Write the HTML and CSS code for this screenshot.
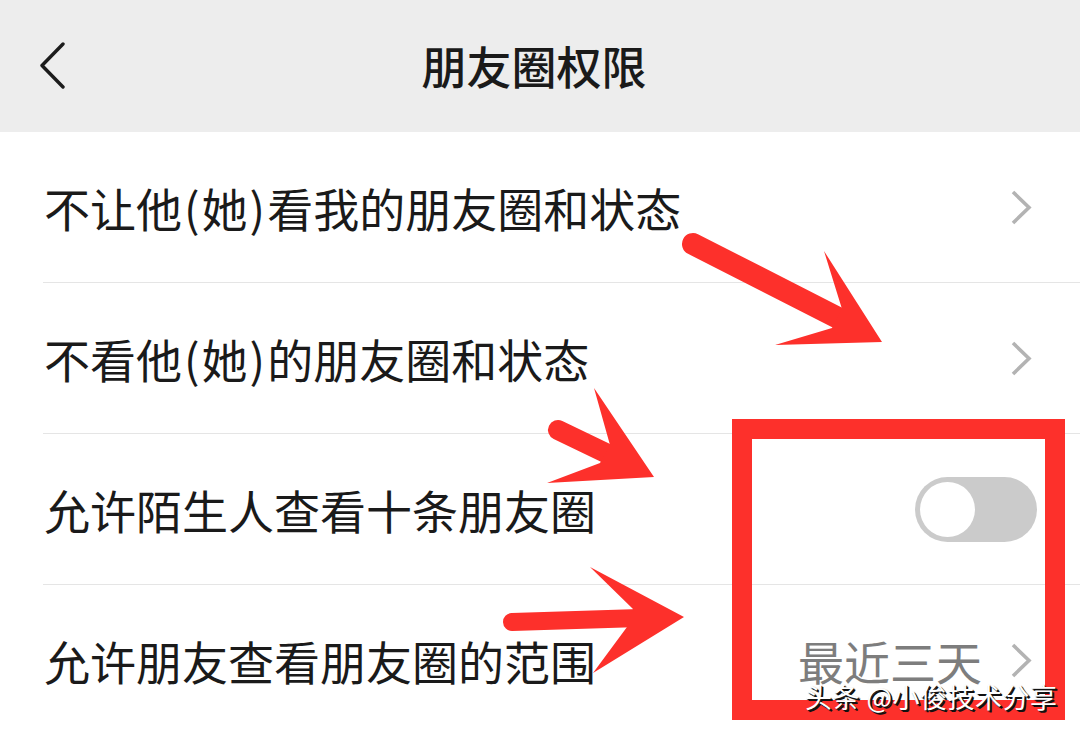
FILE: index.html
```html
<!DOCTYPE html>
<html lang="zh-CN">
<head>
<meta charset="utf-8">
<title>朋友圈权限</title>
<link rel="stylesheet" href="styles.css">
</head>
<body>
<div class="page">
  <header class="nav">
    <div class="nav-back">
      <svg width="30" height="50" viewBox="0 0 30 50"><path d="M23 2 L2 23.5 L23 45" fill="none" stroke="#1c1c1c" stroke-width="3.4" stroke-linecap="round" stroke-linejoin="round"/></svg>
    </div>
    <h1 class="nav-title">朋友圈权限</h1>
    <div class="nav-side"></div>
  </header>

  <ul class="list">
    <li class="row">
      <span class="label">不让他<span class="paren">(</span>她<span class="paren">)</span>看我的朋友圈和状态</span>
      <svg class="chev" width="26" height="36" viewBox="0 0 26 36"><path d="M2 2 L18 17.5 L2 33" fill="none" stroke="#b3b3b3" stroke-width="3.6"/></svg>
    </li>
    <li class="row">
      <span class="label">不看他<span class="paren">(</span>她<span class="paren">)</span>的朋友圈和状态</span>
      <svg class="chev" width="26" height="36" viewBox="0 0 26 36"><path d="M2 2 L18 17.5 L2 33" fill="none" stroke="#b3b3b3" stroke-width="3.6"/></svg>
    </li>
    <li class="row">
      <span class="label">允许陌生人查看十条朋友圈</span>
      <span class="switch"><span class="knob"></span></span>
    </li>
    <li class="row">
      <span class="label">允许朋友查看朋友圈的范围</span>
      <span class="value">
        <span class="value-text">最近三天</span>
        <svg class="chev" width="26" height="36" viewBox="0 0 26 36"><path d="M2 2 L18 17.5 L2 33" fill="none" stroke="#b3b3b3" stroke-width="3.6"/></svg>
      </span>
    </li>
  </ul>

  <svg class="marks" width="1080" height="734" viewBox="0 0 1080 734">
    <g fill="#fd302b" stroke="#fd302b">
      <line x1="693" y1="244" x2="846" y2="322" stroke-width="22" stroke-linecap="round"/>
      <polygon points="882,342 824,251 842,309 832,328 775,345" stroke="none"/>
      <line x1="558" y1="430" x2="612" y2="456" stroke-width="20" stroke-linecap="round"/>
      <polygon points="654,477 594,388 610,445 600,463 547,483" stroke="none"/>
      <line x1="512" y1="622" x2="640" y2="618" stroke-width="18" stroke-linecap="round"/>
      <polygon points="684,617 590,567 633,609 627,627 593,673" stroke="none"/>
      <rect x="742" y="429" width="313" height="281" fill="none" stroke-width="20"/>
    </g>
  </svg>

  <div class="watermark">头条 @小俊技术分享</div>
</div>
</body>
</html>
```

FILE: styles.css
```css
* {
  box-sizing: border-box;
}

html, body {
  margin: 0;
  padding: 0;
  background: #ffffff;
}

body {
  font-family: "Noto Sans CJK SC", "Noto Sans", sans-serif;
  color: #1a1a1a;
  overflow: hidden;
}

.page {
  position: relative;
  width: 1080px;
  height: 734px;
  overflow: hidden;
  background: #ffffff;
}

.nav {
  height: 132px;
  background: #ededed;
  display: grid;
  grid-template-columns: 1fr auto 1fr;
  align-items: center;
  padding-right: 12px;
}

.nav-back {
  padding-left: 40px;
  display: flex;
  align-items: center;
  padding-top: 2px;
}

.nav-title {
  margin: 0;
  font-size: 45px;
  font-weight: 500;
  color: #1a1a1a;
  line-height: 1;
  padding-bottom: 2px;
}

.list {
  list-style: none;
  margin: 0;
  padding: 0;
}

.row {
  height: 151px;
  margin-left: 43px;
  padding: 2px 43px 0 1px;
  border-bottom: 1px solid #e5e5e5;
  display: flex;
  align-items: center;
  justify-content: space-between;
}

.label {
  font-size: 46px;
  line-height: 1.2;
  color: #1a1a1a;
}

.paren {
  margin: 0 2px;
}

.chev {
  display: block;
}

.value {
  display: flex;
  align-items: center;
  gap: 29px;
}

.value-text {
  font-size: 46px;
  line-height: 1.2;
  color: #7d7d7d;
}

.switch {
  width: 122px;
  height: 65px;
  border-radius: 33px;
  background: #cbcbcb;
  padding: 5px;
  display: flex;
  align-items: center;
  margin-top: -2px;
}

.knob {
  width: 55px;
  height: 55px;
  border-radius: 50%;
  background: #ffffff;
}

.marks {
  position: absolute;
  left: 0;
  top: 0;
  pointer-events: none;
}

.watermark {
  position: absolute;
  left: 805px;
  top: 683px;
  font-size: 27px;
  line-height: 27px;
  letter-spacing: 0.5px;
  color: #ffffff;
  white-space: nowrap;
  text-shadow: 2px 2px 0 #111, 1px 1px 1px #000;
}
```
